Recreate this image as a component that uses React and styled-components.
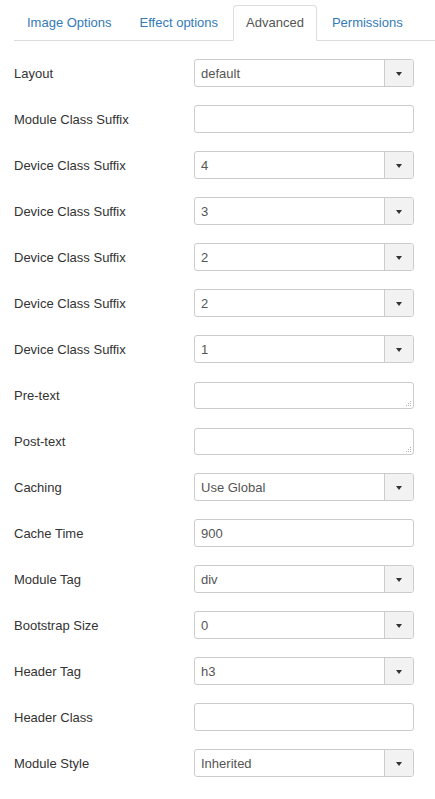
import React from 'react';
import styled, { createGlobalStyle } from 'styled-components';

const GlobalStyle = createGlobalStyle`
  html, body {
    margin: 0;
    padding: 0;
    background: #fff;
  }
  body {
    font-family: "Liberation Sans", Arial, Helvetica, sans-serif;
    font-size: 13px;
    color: #333;
  }
`;

const tabs = ['Image Options', 'Effect options', 'Advanced', 'Permissions'];

const fields = [
  { label: 'Layout', type: 'select', value: 'default' },
  { label: 'Module Class Suffix', type: 'input', value: '' },
  { label: 'Device Class Suffix', type: 'select', value: '4' },
  { label: 'Device Class Suffix', type: 'select', value: '3' },
  { label: 'Device Class Suffix', type: 'select', value: '2' },
  { label: 'Device Class Suffix', type: 'select', value: '2' },
  { label: 'Device Class Suffix', type: 'select', value: '1' },
  { label: 'Pre-text', type: 'textarea', value: '' },
  { label: 'Post-text', type: 'textarea', value: '' },
  { label: 'Caching', type: 'select', value: 'Use Global' },
  { label: 'Cache Time', type: 'input', value: '900' },
  { label: 'Module Tag', type: 'select', value: 'div' },
  { label: 'Bootstrap Size', type: 'select', value: '0' },
  { label: 'Header Tag', type: 'select', value: 'h3' },
  { label: 'Header Class', type: 'input', value: '' },
  { label: 'Module Style', type: 'select', value: 'Inherited' },
];

function Grip() {
  const dots = [
    [8, 2],
    [6, 4], [8, 4],
    [4, 6], [6, 6], [8, 6],
  ];
  return (
    <GripSvg width="10" height="8" viewBox="0 0 10 8">
      {dots.map(([x, y], i) => (
        <rect key={i} x={x} y={y} width="1" height="1" fill="#b5b5b5" />
      ))}
    </GripSvg>
  );
}

function Control({ type, value }) {
  if (type === 'select') {
    return (
      <SelectBox>
        <SelectText>{value}</SelectText>
        <SelectButton>
          <Caret />
        </SelectButton>
      </SelectBox>
    );
  }
  if (type === 'textarea') {
    return (
      <TextArea>
        <Grip />
      </TextArea>
    );
  }
  return <TextInput>{value}</TextInput>;
}

export default function App() {
  return (
    <Page>
      <GlobalStyle />
      <TabList>
        {tabs.map((t) => (
          <Tab key={t} active={t === 'Advanced'}>
            {t}
          </Tab>
        ))}
      </TabList>
      <Form>
        {fields.map((f, i) => (
          <Row key={i}>
            <Label>{f.label}</Label>
            <Control type={f.type} value={f.value} />
          </Row>
        ))}
      </Form>
    </Page>
  );
}

const Page = styled.div`
  padding-left: 14px;
`;

const TabList = styled.div`
  display: flex;
  padding-top: 5px;
  border-bottom: 1px solid #ddd;
`;

const Tab = styled.div`
  box-sizing: border-box;
  padding: 0 12px;
  margin-right: 2px;
  margin-bottom: -1px;
  display: flex;
  align-items: center;
  line-height: 18px;
  border: 1px solid transparent;
  border-radius: 4px 4px 0 0;
  color: ${({ active }) => (active ? '#555' : '#337ab7')};
  background: #fff;
  border-color: ${({ active }) => (active ? '#ddd #ddd transparent' : 'transparent')};
  height: ${({ active }) => (active ? '36px' : '35px')};
`;

const Form = styled.div`
  display: flex;
  flex-direction: column;
  gap: 18px;
  padding-top: 18px;
`;

const Row = styled.div`
  display: flex;
  align-items: center;
  height: 28px;
`;

const Label = styled.div`
  width: 180px;
  color: #333;
`;

const controlBase = `
  box-sizing: border-box;
  width: 220px;
  height: 28px;
  border: 1px solid #ccc;
  border-radius: 3px;
  background: #fff;
  color: #555;
`;

const SelectBox = styled.div`
  ${controlBase}
  display: flex;
  align-items: stretch;
`;

const SelectText = styled.div`
  flex: 1;
  display: flex;
  align-items: center;
  padding-left: 6px;
  color: #555;
`;

const SelectButton = styled.div`
  width: 28px;
  border-left: 1px solid #ccc;
  background: #f2f2f2;
  border-radius: 0 2px 2px 0;
  display: flex;
  align-items: center;
  justify-content: center;
`;

const Caret = styled.span`
  width: 0;
  height: 0;
  margin-top: 1px;
  border-top: 4px solid #333;
  border-left: 3.5px solid transparent;
  border-right: 3.5px solid transparent;
`;

const TextInput = styled.div`
  ${controlBase}
  display: flex;
  align-items: center;
  padding-left: 6px;
`;

const TextArea = styled.div`
  ${controlBase}
  height: 27px;
  position: relative;
`;

const GripSvg = styled.svg`
  position: absolute;
  right: 1px;
  bottom: 1px;
`;
